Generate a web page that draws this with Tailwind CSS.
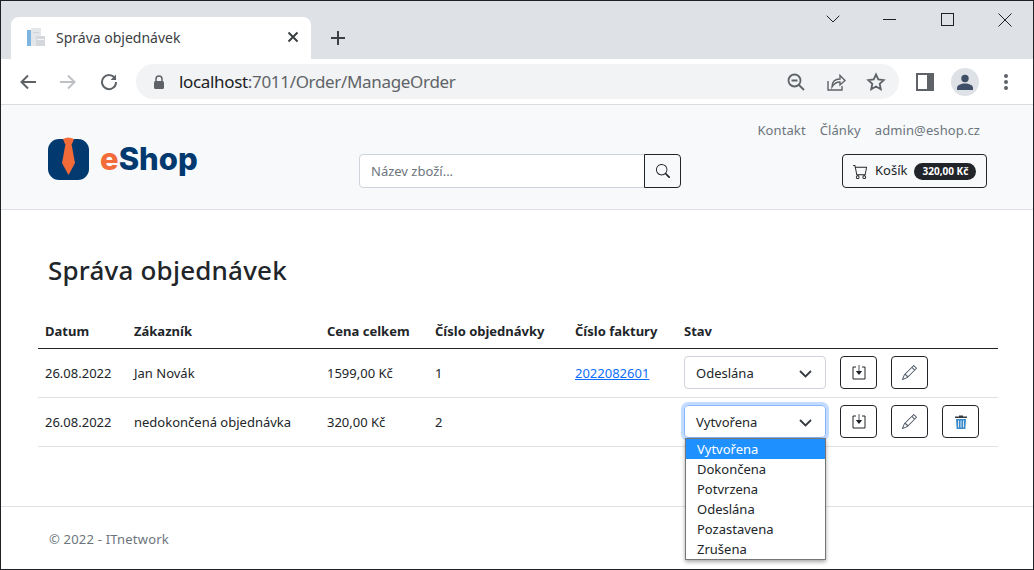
<!doctype html>
<html lang="cs">
<head>
<meta charset="utf-8">
<title>Správa objednávek</title>
<script src="https://cdn.jsdelivr.net/npm/@tailwindcss/browser@4"></script>
</head>
<body class="m-0 h-[570px] w-[1034px] overflow-hidden bg-white font-['Noto_Sans',sans-serif] text-[#212529]">
<div class="relative flex h-[570px] w-[1034px] flex-col overflow-hidden border border-[#202124]">

  <!-- tab strip -->
  <div class="flex h-[58px] shrink-0 items-end bg-[#dee1e6] pl-[10px]">
    <div class="flex h-[42px] w-[300px] items-center rounded-t-[8px] bg-white pb-[2px] pl-[15px] pr-[12px]">
      <svg class="mr-[10px] shrink-0" width="20" height="20" viewBox="0 0 20 20"><rect x="1" y="3" width="4" height="16" fill="#7db4e0"/><rect x="5" y="1" width="10" height="18" fill="#e4e7ea"/><rect x="10" y="9" width="9" height="10" fill="#d4d8dc"/><rect x="11" y="12" width="7" height="1" fill="#f5f5f5"/><rect x="7" y="5" width="6" height="1" fill="#cfd3d7"/></svg>
      <span class="flex-1 text-[14px] text-[#3c4043]">Správa objednávek</span>
      <svg width="12" height="12" viewBox="0 0 12 12" stroke="#3c4043" stroke-width="2"><path d="M1.5 1.5l9 9M10.500 1.500l-9 9"/></svg>
    </div>
    <div class="flex h-[42px] w-[54px] items-center justify-center pb-[1px]">
      <svg width="16" height="16" viewBox="0 0 16 16" stroke="#3c4043" stroke-width="2"><path d="M8 1v14M1 8h14"/></svg>
    </div>
    <div class="ml-auto flex h-[58px] self-start pt-[12px]">
      <svg class="absolute left-[825px] top-[14px]" width="14" height="9" viewBox="0 0 14 9" fill="none" stroke="#202124"><path d="M.7.700l6.300 6.300 6.300-6.300"/></svg>
      <svg class="absolute left-[882px] top-[18px]" width="14" height="2" viewBox="0 0 14 2" stroke="#202124"><path d="M0 .5h13"/></svg>
      <svg class="absolute left-[940px] top-[12px]" width="14" height="14" viewBox="0 0 14 14" fill="none" stroke="#202124" stroke-width="1"><rect x=".5" y=".5" width="12" height="12"/></svg>
      <svg class="absolute left-[997px] top-[12px]" width="14" height="14" viewBox="0 0 14 14" fill="none" stroke="#202124"><path d="M.5.500l13 13M13.500.500l-13 13"/></svg>
    </div>
  </div>

  <!-- toolbar -->
  <div class="flex h-[46px] shrink-0 items-center border-b border-[#dadce0] bg-white pl-[18px]">
    <svg width="18" height="18" viewBox="0 0 18 18" fill="none" stroke="#5f6368" stroke-width="2"><path d="M17 9H3M9 2.500L2.500 9 9 15.500"/></svg>
    <svg class="ml-[22px]" width="18" height="18" viewBox="0 0 18 18" fill="none" stroke="#bdc1c6" stroke-width="2"><path d="M1 9h14M9 2.500L15.500 9 9 15.500"/></svg>
    <svg class="ml-[23px]" width="18" height="18" viewBox="0 0 18 18" fill="none" stroke="#5f6368" stroke-width="2"><path d="M15 5.500A7 7 0 1 0 16 9"/><path d="M16 1.500V7h-5.500z" fill="#5f6368" stroke="none"/></svg>
    <div class="ml-[18px] flex h-[35px] w-[763px] items-center rounded-full bg-[#f1f3f4] pl-[17px]">
      <svg width="12" height="14" viewBox="0 0 12 14"><path d="M3 6V4a3 3 0 0 1 6 0v2" fill="none" stroke="#5f6368" stroke-width="1.500"/><rect x="1" y="6" width="10" height="8" rx="1.500" fill="#5f6368"/></svg>
      <span class="ml-[14px] text-[17px] leading-none tracking-[-0.33px] text-[#5f6368]"><span class="text-[#202124]">localhost</span>:7011/Order/ManageOrder</span>
      <div class="ml-auto flex items-center pr-[13px]">
        <svg width="20" height="20" viewBox="0 0 20 20" fill="none" stroke="#5f6368" stroke-width="1.800"><circle cx="8.500" cy="8.500" r="6"/><path d="M13 13l5 5M5.500 8.500h6"/></svg>
        <svg class="ml-[20px]" width="20" height="20" viewBox="0 0 20 20" fill="none" stroke="#5f6368" stroke-width="1.400"><path d="M2 9v9h14v-4"/><path d="M6 15c0-5 3-8 8-8V3.500L19 8.500l-5 4.500V10c-4 0-6 1.500-8 5z"/></svg>
        <svg class="ml-[20px]" width="20" height="20" viewBox="0 0 20 20" fill="none" stroke="#5f6368" stroke-width="1.800"><path d="M10 2.500l2.300 5 5.400.600-4 3.700 1.100 5.400L10 14.500l-4.800 2.700 1.100-5.400-4-3.700 5.400-.600z"/></svg>
      </div>
    </div>
    <svg class="ml-[17px]" width="18" height="18" viewBox="0 0 18 18"><rect width="18" height="18" fill="#5f6368"/><rect x="2" y="2" width="9" height="14" fill="#fff"/></svg>
    <div class="ml-[17px] flex h-[28px] w-[28px] items-center justify-center rounded-full bg-[#dee1e6]">
      <svg width="16" height="16" viewBox="0 0 16 16" fill="#3f4f68"><circle cx="8" cy="4.500" r="3.700"/><path d="M0 16v-2c0-3 4-4.500 8-4.500s8 1.500 8 4.500v2z"/></svg>
    </div>
    <svg class="ml-[25px]" width="4" height="18" viewBox="0 0 4 18" fill="#5f6368"><circle cx="2" cy="3" r="2"/><circle cx="2" cy="9" r="2"/><circle cx="2" cy="15" r="2"/></svg>
  </div>

  <!-- shop header -->
  <header class="relative h-[105px] shrink-0 border-b border-[#dee2e6] bg-[#f8f9fa]">
    <div class="absolute left-[47px] top-[32px] flex items-center">
      <svg width="41" height="43" viewBox="0 0 41 43"><rect y="2" width="41" height="41" rx="11" fill="#023a70"/><path d="M15 2q5-3 11 0l-2 5h-7z" fill="#f26b38"/><path d="M17.500 7h6l3.500 19-6.500 12-6.500-12z" fill="#f26b38"/></svg>
      <span class="ml-[11px] font-['Inter',sans-serif] text-[31px] font-extrabold leading-none tracking-[0px] text-[#023a70]"><span class="text-[#f26b38]">e</span>Shop</span>
    </div>
    <nav class="absolute right-[53px] top-[16px] flex gap-[14px] text-[13px] tracking-[0.1px] text-[#6c757d]">
      <a>Kontakt</a><a>Články</a><a>admin@eshop.cz</a>
    </nav>
    <div class="absolute left-[358px] top-[49px] flex h-[34px]">
      <div class="flex w-[286px] items-center rounded-l-[4px] border border-[#ced4da] bg-white pl-[11px] pt-[1px] text-[13px] text-[#6c757d]">Název zboží...</div>
      <div class="-ml-px flex w-[37px] items-center justify-center rounded-r-[4px] border border-[#212529]">
        <svg width="14" height="14" viewBox="0 0 16 16" fill="#212529"><path d="M11.742 10.344a6.500 6.500 0 1 0-1.397 1.398h-.001c.03.04.062.078.098.115l3.850 3.850a1 1 0 0 0 1.415-1.414l-3.850-3.850a1.007 1.007 0 0 0-.115-.1zM12 6.500a5.500 5.500 0 1 1-11 0 5.500 5.500 0 0 1 11 0z"/></svg>
      </div>
    </div>
    <div class="absolute left-[841px] top-[49px] flex h-[34px] w-[145px] items-center rounded-[4px] border border-[#212529] pl-[10px] text-[13px]">
      <svg width="15" height="15" viewBox="0 0 16 16" fill="#212529"><path d="M0 1.500A.5.500 0 0 1 .5 1H2a.5.500 0 0 1 .485.379L2.890 3H14.500a.5.500 0 0 1 .491.592l-1.500 8A.5.500 0 0 1 13 12H4a.5.500 0 0 1-.491-.408L2.010 3.607 1.610 2H.5a.5.500 0 0 1-.5-.5zM3.102 4l1.313 7h8.170l1.313-7H3.102zM5 12a2 2 0 1 0 0 4 2 2 0 0 0 0-4zm7 0a2 2 0 1 0 0 4 2 2 0 0 0 0-4zm-7 1a1 1 0 1 1 0 2 1 1 0 0 1 0-2zm7 0a1 1 0 1 1 0 2 1 1 0 0 1 0-2z"/></svg>
      <span class="ml-[7px]">Košík</span>
      <span class="ml-[7px] flex h-[17px] w-[62px] items-center justify-center rounded-full bg-[#212529] text-[10px] font-bold text-white">320,00 Kč</span>
    </div>
  </header>

  <!-- main -->
  <main class="h-[296px] shrink-0 px-[37px]">
    <h1 class="mb-[24px] ml-[10px] mt-[41px] text-[26px] font-medium leading-[38px] tracking-[0.2px]">Správa objednávek</h1>
    <table class="w-[960px] table-fixed border-collapse text-[13px]">
      <colgroup><col class="w-[89px]"><col class="w-[193px]"><col class="w-[108px]"><col class="w-[140px]"><col class="w-[109px]"><col></colgroup>
      <thead>
        <tr class="h-[35px] border-b border-[#212529] text-left font-bold">
          <th class="pl-[7px] pt-[3px] font-bold">Datum</th><th class="pl-[7px] pt-[3px] font-bold">Zákazník</th><th class="pl-[7px] pt-[3px] font-bold">Cena celkem</th><th class="pl-[7px] pt-[3px] font-bold">Číslo objednávky</th><th class="pl-[7px] pt-[3px] font-bold">Číslo faktury</th><th class="pl-[7px] pt-[3px] font-bold">Stav</th>
        </tr>
      </thead>
      <tbody>
        <tr class="h-[49px] border-b border-[#dee2e6]">
          <td class="pl-[7px] pt-[2px]">26.08.2022</td><td class="pl-[7px] pt-[2px]">Jan Novák</td><td class="pl-[7px] pt-[2px]">1599,00 Kč</td><td class="pl-[7px] pt-[2px]">1</td>
          <td class="pl-[7px] pt-[2px]"><a class="text-[#0d6efd] underline">2022082601</a></td>
          <td class="pl-[7px]">
            <div class="flex items-center">
              <div class="flex h-[33px] w-[142px] items-center justify-between rounded-[4px] border border-[#ced4da] pl-[11px] pr-[13px] pt-[2px]">Odeslána
                <svg width="13" height="8" viewBox="0 0 13 8" fill="none" stroke="#343a40" stroke-width="1.800"><path d="M1 1l5.500 5.500L12 1"/></svg>
              </div>
              <div class="ml-[14px] flex h-[33px] w-[37px] items-center justify-center rounded-[4px] border border-[#212529]">
                <svg width="14" height="15" viewBox="0 0 14 15"><path d="M4 2H1v12h12V2h-3" fill="none" stroke="#212529"/><path d="M7 0v6" stroke="#6c757d" stroke-width="1.200"/><path d="M3.800 6h6.400L7 10z" fill="#212529"/></svg>
              </div>
              <div class="ml-[14px] flex h-[33px] w-[37px] items-center justify-center rounded-[4px] border border-[#212529]">
                <svg width="15" height="15" viewBox="0 0 16 16" fill="#4b5563"><path d="M12.146.146a.5.500 0 0 1 .708 0l3 3a.5.500 0 0 1 0 .708l-10 10a.5.500 0 0 1-.168.110l-5 2a.5.500 0 0 1-.650-.650l2-5a.5.500 0 0 1 .110-.168l10-10zM11.207 2.500L13.500 4.793 14.793 3.500 12.500 1.207 11.207 2.500zm1.586 3L10.500 3.207 4 9.707V10h.5a.5.500 0 0 1 .5.500v.5h.5a.5.500 0 0 1 .5.500v.5h.293l6.500-6.500zm-9.761 5.175l-.106.106-1.528 3.821 3.821-1.528.106-.106A.5.500 0 0 1 5 12.500V12h-.5a.5.500 0 0 1-.5-.5V11h-.5a.5.500 0 0 1-.468-.325z"/></svg>
              </div>
            </div>
          </td>
        </tr>
        <tr class="h-[49px] border-b border-[#dee2e6]">
          <td class="pl-[7px] pt-[2px]">26.08.2022</td><td class="pl-[7px] pt-[2px]">nedokončená objednávka</td><td class="pl-[7px] pt-[2px]">320,00 Kč</td><td class="pl-[7px] pt-[2px]">2</td>
          <td class="pl-[7px]"></td>
          <td class="pl-[7px]">
            <div class="flex items-center">
              <div class="flex h-[33px] w-[142px] items-center justify-between rounded-[4px] border border-[#86b7fe] pl-[11px] pr-[13px] pt-[2px] shadow-[0_0_0_3px_rgba(13,110,253,0.25)]">Vytvořena
                <svg width="13" height="8" viewBox="0 0 13 8" fill="none" stroke="#343a40" stroke-width="1.800"><path d="M1 1l5.500 5.500L12 1"/></svg>
              </div>
              <div class="ml-[14px] flex h-[33px] w-[37px] items-center justify-center rounded-[4px] border border-[#212529]">
                <svg width="14" height="15" viewBox="0 0 14 15"><path d="M4 2H1v12h12V2h-3" fill="none" stroke="#212529"/><path d="M7 0v6" stroke="#6c757d" stroke-width="1.200"/><path d="M3.800 6h6.400L7 10z" fill="#212529"/></svg>
              </div>
              <div class="ml-[14px] flex h-[33px] w-[37px] items-center justify-center rounded-[4px] border border-[#212529]">
                <svg width="15" height="15" viewBox="0 0 16 16" fill="#4b5563"><path d="M12.146.146a.5.500 0 0 1 .708 0l3 3a.5.500 0 0 1 0 .708l-10 10a.5.500 0 0 1-.168.110l-5 2a.5.500 0 0 1-.650-.650l2-5a.5.500 0 0 1 .110-.168l10-10zM11.207 2.500L13.500 4.793 14.793 3.500 12.500 1.207 11.207 2.500zm1.586 3L10.500 3.207 4 9.707V10h.5a.5.500 0 0 1 .5.500v.5h.5a.5.500 0 0 1 .5.500v.5h.293l6.500-6.500zm-9.761 5.175l-.106.106-1.528 3.821 3.821-1.528.106-.106A.5.500 0 0 1 5 12.500V12h-.5a.5.500 0 0 1-.5-.5V11h-.5a.5.500 0 0 1-.468-.325z"/></svg>
              </div>
              <div class="ml-[14px] flex h-[33px] w-[37px] items-center justify-center rounded-[4px] border border-[#212529]">
                <svg width="12" height="14" viewBox="0 0 12 14"><path d="M4 1.500V.500h4v1h4V3H0V1.500z" fill="#343a40"/><path d="M1 4h10l-.6 10H1.600z" fill="#3d8bc9"/><path d="M3.500 5.500v7M6 5.500v7M8.500 5.500v7" stroke="#d5e6f5"/></svg>
              </div>
            </div>
          </td>
        </tr>
      </tbody>
    </table>
  </main>

  <footer class="flex flex-1 items-center border-t border-[#dee2e6] pl-[48px] pt-[4px] text-[13px] tracking-[0.2px] text-[#6c757d]">© 2022 - ITnetwork</footer>

  <!-- open select list -->
  <ul class="absolute left-[684px] top-[437px] w-[141px] border border-[#767676] bg-white text-[13px] leading-[20px] shadow-[0_2px_4px_rgba(0,0,0,0.35)]">
    <li class="bg-[#1e90ff] pl-[11px] text-white">Vytvořena</li>
    <li class="pl-[11px]">Dokončena</li>
    <li class="pl-[11px]">Potvrzena</li>
    <li class="pl-[11px]">Odeslána</li>
    <li class="pl-[11px]">Pozastavena</li>
    <li class="pl-[11px]">Zrušena</li>
  </ul>
</div>
</body>
</html>
